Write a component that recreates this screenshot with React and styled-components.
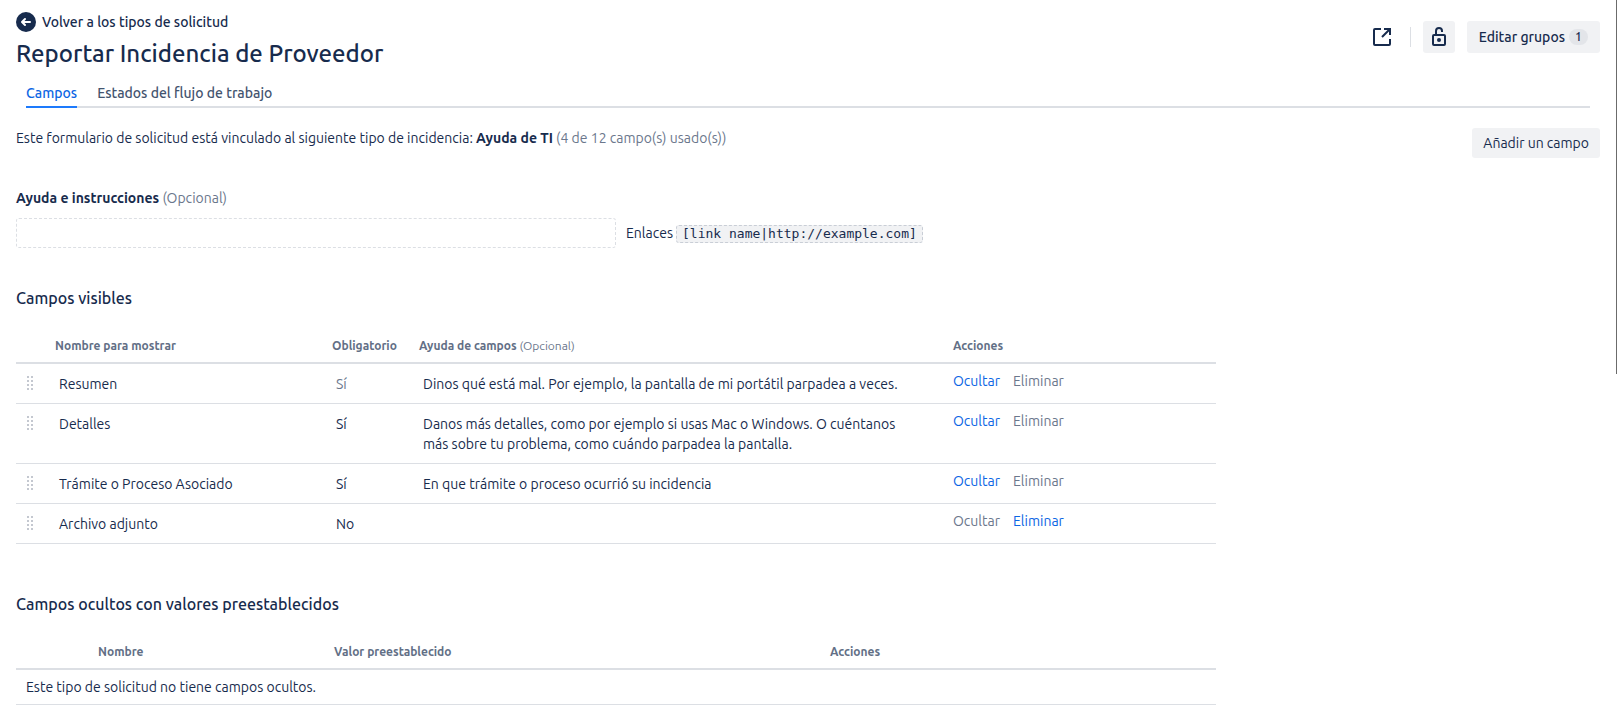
import React from "react";
import styled, { createGlobalStyle } from "styled-components";

const GlobalStyle = createGlobalStyle`
  *, *::before, *::after { box-sizing: border-box; }
  body {
    margin: 0;
    background: #fff;
    color: #172b4d;
    font: 400 14px/20px Ubuntu, Roboto, "Noto Sans", sans-serif;
  }
  button, input { font: inherit; color: inherit; }
  h1, h2, p { margin: 0; }
`;

const Page = styled.main`
  padding: 11px 17px 19px 16px;
`;

const ScrollThumb = styled.div`
  position: fixed;
  top: 0;
  right: 0;
  width: 1px;
  height: 374px;
  background: #6b6b6b;
`;

const Header = styled.header`
  display: flex;
  justify-content: space-between;
  align-items: flex-start;
`;

const BackLink = styled.a`
  display: inline-flex;
  align-items: center;
  gap: 6px;
  height: 22px;
  color: #172b4d;
  font-weight: 500;
  text-decoration: none;
`;

const Title = styled.h1`
  margin-top: 3px;
  font-size: 24px;
  line-height: 28px;
  font-weight: 500;
`;

const HeaderActions = styled.div`
  display: flex;
  align-items: center;
  gap: 12px;
  padding-top: 10px;
`;

const Divider = styled.span`
  width: 1px;
  height: 20px;
  background: #dcdfe4;
`;

const Button = styled.button`
  display: inline-flex;
  align-items: center;
  justify-content: center;
  gap: 4px;
  height: ${(p) => (p.$compact ? 30 : 32)}px;
  padding: 0 ${(p) => (p.$compact ? 11 : 12)}px;
  border: 0;
  border-radius: 3px;
  background: #f1f2f4;
  font-weight: ${(p) => (p.$compact ? 400 : 500)};
  white-space: nowrap;
  cursor: pointer;
`;

const IconButton = styled.button`
  display: inline-flex;
  align-items: center;
  justify-content: center;
  width: 32px;
  height: 32px;
  padding: 0;
  border: 0;
  border-radius: 3px;
  background: ${(p) => (p.$subtle ? "transparent" : "#f1f2f4")};
  cursor: pointer;
`;

const Badge = styled.span`
  min-width: 19px;
  height: 16px;
  padding: 0 6px;
  border-radius: 8px;
  background: #e3e5e9;
  font-size: 12px;
  line-height: 16px;
  font-weight: 500;
`;

const Tabs = styled.nav`
  display: flex;
  gap: 20px;
  margin: 11px 10px 0;
  border-bottom: 2px solid #dcdfe4;
`;

const Tab = styled.a`
  margin-bottom: -2px;
  padding: 4px 0 3px;
  border-bottom: 2px solid ${(p) => (p.$active ? "#1d7afc" : "transparent")};
  color: ${(p) => (p.$active ? "#0c66e4" : "#44546f")};
  font-weight: 500;
  text-decoration: none;
`;

const IntroRow = styled.div`
  display: flex;
  justify-content: space-between;
  align-items: flex-start;
  padding-top: 20px;
`;

const Intro = styled.p`
  line-height: 20px;
`;

const Strong = styled.strong`
  font-weight: 700;
`;

const Muted = styled.span`
  color: #6b778c;
  font-weight: 400;
`;

const HelpField = styled.div`
  margin-top: 30px;
`;

const HelpLabel = styled.label`
  display: block;
  font-weight: 700;
`;

const HelpLine = styled.div`
  display: flex;
  align-items: center;
  gap: 10px;
  margin-top: 10px;
`;

const HelpInput = styled.input`
  flex: 0 1 600px;
  min-width: 0;
  height: 30px;
  padding: 4px;
  border: 1px dashed #dcdfe4;
  border-radius: 3px;
  background: #fff;
`;

const Syntax = styled.span`
  display: flex;
  align-items: baseline;
  gap: 3px;
`;

const Code = styled.code`
  padding: 0 5px;
  border: 1px dashed #c9ced6;
  border-radius: 3px;
  background: #f1f2f4;
  font: 13px/16px "DejaVu Sans Mono", monospace;
  white-space: nowrap;
`;

const Section = styled.section`
  max-width: 1200px;
  margin-top: ${(p) => (p.$first ? 40 : 50)}px;
`;

const SectionTitle = styled.h2`
  font-size: 16px;
  line-height: 20px;
  font-weight: 500;
`;

const Table = styled.table`
  width: 100%;
  margin-top: 24px;
  border-spacing: 0;
  table-layout: fixed;
`;

const Col = styled.col`
  width: ${(p) => p.$width || "auto"};
`;

const HeadCell = styled.th`
  height: 32px;
  padding: 0 10px 2px;
  border-bottom: 2px solid #dcdfe4;
  color: #626f86;
  font-size: 12px;
  line-height: 20px;
  font-weight: 700;
  text-align: left;
  vertical-align: middle;
`;

const Cell = styled.td`
  padding: 10px 14px 9px;
  border-bottom: 1px solid #dcdfe4;
  color: ${(p) => (p.$muted ? "#6b778c" : "#172b4d")};
  vertical-align: top;
`;

const HandleCell = styled(Cell)`
  padding: 12px 0 0 11px;
  line-height: 0;
`;

const HelpCell = styled(Cell)`
  padding-right: 36px;
`;

const ActionsCell = styled(Cell)`
  padding: 7px 10px 12px;
`;

const EmptyCell = styled(Cell)`
  padding: 7px 10px;
`;

const Handle = styled.button`
  display: block;
  padding: 0;
  border: 0;
  background: none;
  line-height: 0;
  cursor: grab;
`;

const ActionList = styled.div`
  display: flex;
  gap: 13px;
`;

const ActionButton = styled.button`
  padding: 0;
  border: 0;
  background: none;
  color: #0c66e4;
  cursor: pointer;

  &:disabled {
    color: #6b778c;
    cursor: default;
  }
`;

const BackIcon = () => (
  <svg width="20" height="20" viewBox="0 0 20 20" aria-hidden="true">
    <circle cx="10" cy="10" r="10" fill="#172b4d" />
    <path d="M14 10H6.500M9 7L6 10l3 3" fill="none" stroke="#fff" strokeWidth="2" strokeLinecap="round" strokeLinejoin="round" />
  </svg>
);

const OpenIcon = () => (
  <svg width="18" height="18" viewBox="0 0 18 18" fill="none" stroke="#172b4d" strokeWidth="2" aria-hidden="true">
    <path d="M8 1H2a1 1 0 0 0-1 1v14a1 1 0 0 0 1 1h14a1 1 0 0 0 1-1v-5" />
    <path d="M11 1h6v6M17 1L9 9" />
  </svg>
);

const UnlockIcon = () => (
  <svg width="14" height="20" viewBox="0 0 14 20" fill="none" stroke="#172b4d" strokeWidth="2" aria-hidden="true">
    <rect x="1" y="8" width="12" height="10" rx="1" />
    <path d="M4 8V4a3 3 0 0 1 6 0v1" />
    <circle cx="7" cy="13" r="2" fill="#172b4d" stroke="none" />
  </svg>
);

const HandleIcon = () => (
  <svg width="6" height="14" viewBox="0 0 6 14" fill="#c4c8d0" aria-hidden="true">
    {[0, 4, 8, 12].map((y) => (
      <React.Fragment key={y}>
        <rect x="0" y={y} width="2" height="2" />
        <rect x="4" y={y} width="2" height="2" />
      </React.Fragment>
    ))}
  </svg>
);

const FIELDS = [
  {
    name: "Resumen",
    required: "Sí",
    fixed: true,
    help: "Dinos qué está mal. Por ejemplo, la pantalla de mi portátil parpadea a veces.",
    canHide: true,
  },
  {
    name: "Detalles",
    required: "Sí",
    help: "Danos más detalles, como por ejemplo si usas Mac o Windows. O cuéntanos más sobre tu problema, como cuándo parpadea la pantalla.",
    canHide: true,
  },
  {
    name: "Trámite o Proceso Asociado",
    required: "Sí",
    help: "En que trámite o proceso ocurrió su incidencia",
    canHide: true,
  },
  { name: "Archivo adjunto", required: "No", help: "", canHide: false },
];

const FieldRow = ({ field }) => (
  <tr>
    <HandleCell>
      <Handle type="button" aria-label={`Mover ${field.name}`}>
        <HandleIcon />
      </Handle>
    </HandleCell>
    <Cell>{field.name}</Cell>
    <Cell $muted={field.fixed}>{field.required}</Cell>
    <HelpCell>{field.help}</HelpCell>
    <ActionsCell>
      <ActionList>
        <ActionButton type="button" disabled={!field.canHide}>Ocultar</ActionButton>
        <ActionButton type="button" disabled={field.canHide}>Eliminar</ActionButton>
      </ActionList>
    </ActionsCell>
  </tr>
);

export default function App() {
  return (
    <>
      <GlobalStyle />
      <Page>
        <Header>
          <div>
            <BackLink href="#tipos">
              <BackIcon />
              Volver a los tipos de solicitud
            </BackLink>
            <Title>Reportar Incidencia de Proveedor</Title>
          </div>
          <HeaderActions>
            <IconButton type="button" $subtle aria-label="Abrir en el portal">
              <OpenIcon />
            </IconButton>
            <Divider />
            <IconButton type="button" aria-label="Restricciones">
              <UnlockIcon />
            </IconButton>
            <Button type="button">
              Editar grupos <Badge>1</Badge>
            </Button>
          </HeaderActions>
        </Header>

        <Tabs>
          <Tab href="#campos" $active aria-current="page">Campos</Tab>
          <Tab href="#estados">Estados del flujo de trabajo</Tab>
        </Tabs>

        <IntroRow>
          <Intro>
            Este formulario de solicitud está vinculado al siguiente tipo de incidencia:{" "}
            <Strong>Ayuda de TI</Strong> <Muted>(4 de 12 campo(s) usado(s))</Muted>
          </Intro>
          <Button type="button" $compact>Añadir un campo</Button>
        </IntroRow>

        <HelpField>
          <HelpLabel htmlFor="help">
            Ayuda e instrucciones <Muted>(Opcional)</Muted>
          </HelpLabel>
          <HelpLine>
            <HelpInput id="help" type="text" />
            <Syntax>
              Enlaces <Code>[link name|http://example.com]</Code>
            </Syntax>
          </HelpLine>
        </HelpField>

        <Section $first>
          <SectionTitle>Campos visibles</SectionTitle>
          <Table>
            <colgroup>
              <Col $width="29px" />
              <Col $width="277px" />
              <Col $width="87px" />
              <Col $width="534px" />
              <Col />
            </colgroup>
            <thead>
              <tr>
                <HeadCell as="td" />
                <HeadCell scope="col">Nombre para mostrar</HeadCell>
                <HeadCell scope="col">Obligatorio</HeadCell>
                <HeadCell scope="col">
                  Ayuda de campos <Muted>(Opcional)</Muted>
                </HeadCell>
                <HeadCell scope="col">Acciones</HeadCell>
              </tr>
            </thead>
            <tbody>
              {FIELDS.map((field) => (
                <FieldRow key={field.name} field={field} />
              ))}
            </tbody>
          </Table>
        </Section>

        <Section>
          <SectionTitle>Campos ocultos con valores preestablecidos</SectionTitle>
          <Table>
            <colgroup>
              <Col $width="72px" />
              <Col $width="236px" />
              <Col $width="496px" />
              <Col />
            </colgroup>
            <thead>
              <tr>
                <HeadCell as="td" />
                <HeadCell scope="col">Nombre</HeadCell>
                <HeadCell scope="col">Valor preestablecido</HeadCell>
                <HeadCell scope="col">Acciones</HeadCell>
              </tr>
            </thead>
            <tbody>
              <tr>
                <EmptyCell colSpan={4}>Este tipo de solicitud no tiene campos ocultos.</EmptyCell>
              </tr>
            </tbody>
          </Table>
        </Section>
      </Page>
      <ScrollThumb />
    </>
  );
}
